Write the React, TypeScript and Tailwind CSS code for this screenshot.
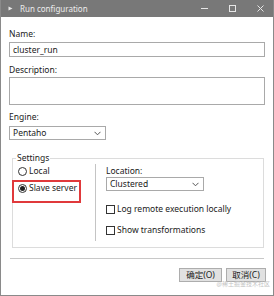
import React from 'react';

const font = { fontFamily: '"Noto Sans", "Noto Sans CJK SC", sans-serif' };

const Chevron: React.FC = () => (
  <svg width="7" height="5" viewBox="0 0 7 5" className="shrink-0">
    <polyline points="0.5,0.8 3.5,3.8 6.5,0.8" fill="none" stroke="#555" strokeWidth="1" />
  </svg>
);

const Select: React.FC<{ value: string; className: string }> = ({ value, className }) => (
  <div className={`flex items-center justify-between border border-[#a9a9a9] bg-white pl-[3px] pr-[4px] ${className}`}>
    <span className="text-[8.5px] leading-[12px] text-[#1a1a1a]">{value}</span>
    <Chevron />
  </div>
);

const Radio: React.FC<{ checked?: boolean; label: string }> = ({ checked, label }) => (
  <div className="flex items-center gap-[2px] h-[12px] whitespace-nowrap">
    <span className="w-[9px] h-[9px] shrink-0 rounded-full border border-[#333] bg-white flex items-center justify-center">
      {checked && <span className="w-[5px] h-[5px] rounded-full bg-[#222]" />}
    </span>
    <span className="text-[8.5px] leading-[12px] text-[#1a1a1a]">{label}</span>
  </div>
);

const Checkbox: React.FC<{ label: string; className: string }> = ({ label, className }) => (
  <div className={`flex items-center gap-[2px] h-[12px] whitespace-nowrap ${className}`}>
    <span className="w-[9px] h-[9px] shrink-0 border border-[#333] bg-white" />
    <span className="text-[8.5px] leading-[12px] text-[#1a1a1a]">{label}</span>
  </div>
);

export default function App() {
  return (
    <div style={font} className="w-[274px] h-[296px] flex flex-col bg-white border-x border-b border-[#8a8a8a] overflow-hidden">
      {/* Title bar */}
      <div className="h-[17px] shrink-0 bg-[#787878] flex items-center pl-[7px] pr-[9px]">
        <svg width="5" height="5" viewBox="0 0 5 5" className="shrink-0">
          <polygon points="0.5,0.5 4.5,2.5 0.5,4.5" fill="#e6e6e6" />
        </svg>
        <span className="ml-[7px] text-[8px] leading-[12px] text-[#ececec]">Run configuration</span>
        <div className="ml-auto flex items-center gap-[21px]">
          <svg width="7" height="7" viewBox="0 0 7 7">
            <line x1="0" y1="3.5" x2="7" y2="3.5" stroke="#e6e6e6" strokeWidth="1" />
          </svg>
          <svg width="7" height="7" viewBox="0 0 7 7">
            <rect x="0.5" y="0.5" width="6" height="6" fill="none" stroke="#e6e6e6" strokeWidth="1" />
          </svg>
          <svg width="7" height="7" viewBox="0 0 7 7">
            <path d="M0.5 0.5 L6.5 6.5 M6.5 0.5 L0.5 6.5" stroke="#e6e6e6" strokeWidth="1" />
          </svg>
        </div>
      </div>

      {/* Body */}
      <div className="flex flex-col px-[8px]">
        <span className="mt-[11px] text-[8.5px] leading-[12px] text-[#1a1a1a]">Name:</span>
        <div className="mt-[2px] h-[15px] border border-[#a9a9a9] bg-white flex items-center pl-[3px]">
          <span className="text-[8.5px] leading-[12px] text-[#1a1a1a]">cluster_run</span>
        </div>

        <span className="mt-[7px] text-[8.5px] leading-[12px] text-[#1a1a1a]">Description:</span>
        <div className="mt-[1px] h-[28px] border border-[#a9a9a9] bg-white" />

        <span className="mt-[6px] text-[8.5px] leading-[12px] text-[#1a1a1a]">Engine:</span>
        <Select value="Pentaho" className="mt-[3px] h-[14px] w-[97px]" />

        <fieldset className="mt-[12px] ml-[3px] mr-[1px] border border-[#dcdcdc] pb-[6px]">
          <legend className="ml-[3px] px-[1px] text-[8.5px] leading-[12px] text-[#1a1a1a]">Settings</legend>
          <div className="flex">
            <div className="w-[83px] shrink-0 border-r border-[#c4c4c4] flex flex-col">
              <div className="mt-[1px] pl-[5px]">
                <Radio label="Local" />
              </div>
              <div className="mt-[3px] -ml-[1px] w-[69px] border-2 border-[#e0393b] pl-[4px] pb-[7px]">
                <Radio checked label="Slave server" />
              </div>
              <div className="h-[38px]" />
            </div>
            <div className="flex flex-col pl-[10px]">
              <span className="mt-[1px] text-[8.5px] leading-[12px] text-[#1a1a1a]">Location:</span>
              <Select value="Clustered" className="h-[14px] w-[98px]" />
              <Checkbox label="Log remote execution locally" className="mt-[12px]" />
              <Checkbox label="Show transformations" className="mt-[9px]" />
            </div>
          </div>
        </fieldset>

        <div className="mt-[10px] mx-[1px] h-px bg-[#c8c8c8]" />

        <div className="mt-[9px] flex justify-end gap-[4px] -mr-[1px]">
          <button className="w-[43px] h-[14px] border border-[#adadad] bg-[#e1e1e1] text-[8.5px] leading-[12px] text-[#1a1a1a]">确定(O)</button>
          <button className="w-[40px] h-[14px] border border-[#adadad] bg-[#e1e1e1] text-[8.5px] leading-[12px] text-[#1a1a1a]">取消(C)</button>
        </div>
        <div className="flex justify-end -mr-[5px] -mt-[1px]">
          <span className="text-[6px] leading-[7px] text-[#c4c4c4]">@稀土掘金技术社区</span>
        </div>
      </div>
    </div>
  );
}
